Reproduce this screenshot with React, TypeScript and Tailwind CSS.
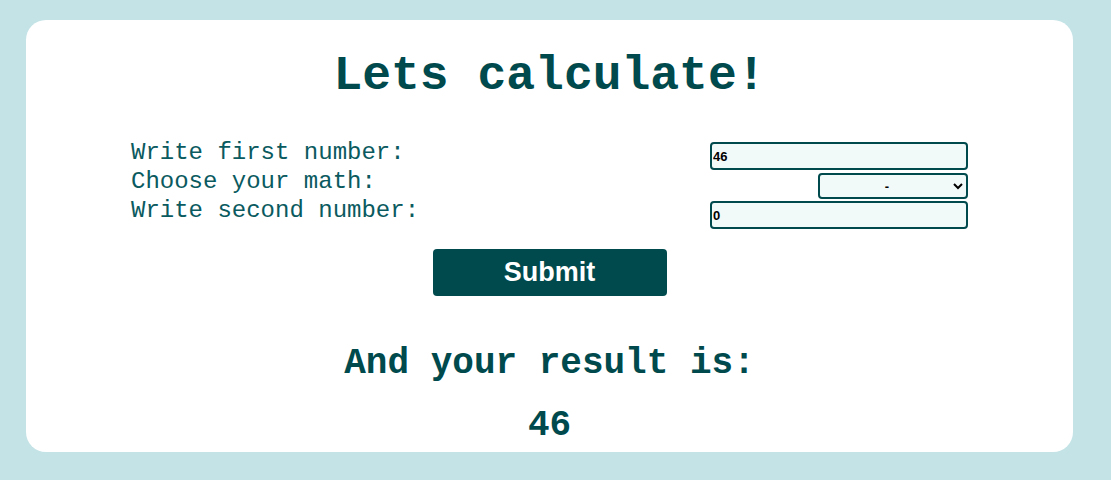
import React from "react";

export default function App() {
  const mono = { fontFamily: '"Courier New", Courier, "Nimbus Mono PS", "Nimbus Mono L", FreeMono, "Liberation Mono", monospace' };
  return (
    <div className="w-[1111px] h-[480px] bg-[#c4e3e6] pt-[20px] pl-[26px] overflow-hidden">
      <div className="w-[1047px] h-[432px] rounded-[20px] bg-white flex flex-col items-center text-[#004a4d]" style={mono}>
        <h1 className="text-[48px] leading-[56px] font-bold pt-[28px]">Lets calculate!</h1>
        <div className="w-full px-[105px] mt-[38px] flex justify-between">
          <div className="flex flex-col text-[24px] leading-[29px] text-[#0a5a60] mt-[-4px]">
            <span>Write first number:</span>
            <span>Choose your math:</span>
            <span>Write second number:</span>
          </div>
          <div className="flex flex-col items-end w-[258px]" style={{ fontFamily: '"Liberation Sans", Arial, sans-serif' }}>
            <input
              readOnly
              value="46"
              className="w-[258px] h-[28px] border-2 border-[#004a4d] rounded-[4px] bg-[#f2f9f9] px-[1px] text-[13px] font-bold text-black outline-none"
            />
            <select
              defaultValue="-"
              className="mt-[3px] w-[150px] h-[26px] border-2 border-[#004a4d] rounded-[4px] bg-[#f2f9f9] text-[13px] font-bold text-black text-center outline-none"
            >
              <option value="+">+</option>
              <option value="-">-</option>
              <option value="*">*</option>
              <option value="/">/</option>
            </select>
            <input
              readOnly
              value="0"
              className="mt-[2px] w-[258px] h-[28px] border-2 border-[#004a4d] rounded-[4px] bg-[#f2f9f9] px-[1px] text-[13px] font-bold text-black outline-none"
            />
          </div>
        </div>
        <button
          className="mt-[20px] w-[234px] h-[47px] rounded-[4px] bg-[#004a4d] text-white text-[27px] font-bold"
          style={{ fontFamily: '"Liberation Sans", Arial, sans-serif' }}
        >
          Submit
        </button>
        <h2 className="mt-[48px] text-[36px] leading-[40px] font-bold">And your result is:</h2>
        <p className="mt-[22px] text-[36px] leading-[40px] font-bold">46</p>
      </div>
    </div>
  );
}
